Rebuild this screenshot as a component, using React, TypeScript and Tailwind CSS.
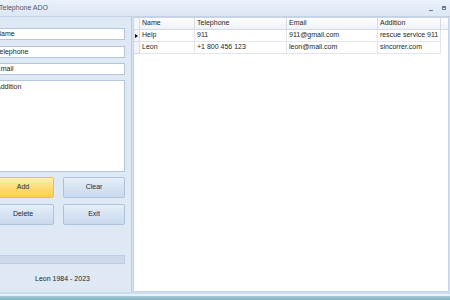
import React from 'react';

const rows = [
    { name: 'Help', tel: '911', email: '911@gmail.com', add: 'rescue service 911', current: true },
    { name: 'Leon', tel: '+1 800 456 123', email: 'leon@mail.com', add: 'sincorrer.com', current: false },
];

const cols = [
    { key: 'name', label: 'Name', w: 'w-[55px]' },
    { key: 'tel', label: 'Telephone', w: 'w-[92px]' },
    { key: 'email', label: 'Email', w: 'w-[91px]' },
    { key: 'add', label: 'Addition', w: 'w-[63px]' },
] as const;

function Field({ text, className = '' }: { text: string; className?: string }) {
    return (
        <div className={`bg-white border border-[#b4c6dc] px-[3px] text-[7px] leading-[10px] text-[#222] ${className}`}>
            {text}
        </div>
    );
}

function Btn({ label, yellow = false }: { label: string; yellow?: boolean }) {
    return (
        <div
            className={`w-[62px] h-[21px] flex items-center justify-center rounded-[2px] border text-[7px] text-[#1f2a38] ${
                yellow
                    ? 'bg-gradient-to-b from-[#fff0b8] via-[#fddc74] to-[#fcd04f] border-[#e2bd62]'
                    : 'bg-gradient-to-b from-[#e7eff9] via-[#d6e3f3] to-[#c9d9ee] border-[#adc2db]'
            }`}
        >
            {label}
        </div>
    );
}

export default function App() {
    return (
        <div
            className="w-[450px] h-[300px] overflow-hidden flex flex-col bg-[#d8e4f3]"
            style={{ fontFamily: '"Liberation Sans", Arial, sans-serif' }}
        >
            {/* Title bar */}
            <div className="h-[17px] shrink-0 flex items-center bg-gradient-to-b from-[#eaf1fa] to-[#dce7f5] border-b border-[#c3d3e7] relative">
                <span className="-ml-[1px] text-[7px] text-[#4a5a70]">Telephone ADO</span>
                <div className="ml-auto flex items-center gap-[9px] pr-[4px]">
                    <div className="w-[4px] h-[1px] bg-[#6b7c92] mt-[4px]" />
                    <div className="w-[4px] h-[4px] border border-[#6b7c92] border-t-2" />
                </div>
            </div>

            {/* Body */}
            <div className="flex flex-1 min-h-0">
                {/* Left panel */}
                <div className="w-[132px] shrink-0 bg-[#dfe9f6] border-r border-[#b9cbe0] pr-[6px] overflow-hidden">
                    <div className="-ml-[8px] w-[133px] flex flex-col pt-[11px]">
                        <Field text="Name" className="h-[12px]" />
                        <Field text="Telephone" className="h-[12px] mt-[6px]" />
                        <Field text="Email" className="h-[12px] mt-[5px]" />
                        <Field text="Addition" className="h-[92px] mt-[5px] pt-[1px]" />
                        <div className="flex justify-between mt-[5px]">
                            <Btn label="Add" yellow />
                            <Btn label="Clear" />
                        </div>
                        <div className="flex justify-between mt-[6px]">
                            <Btn label="Delete" />
                            <Btn label="Exit" />
                        </div>
                        <div className="h-[9px] mt-[30px] bg-[#ccdaec] border border-[#bccde2]" />
                        <div className="mt-[10px] pl-[8px] text-center text-[7px] text-[#222]">Leon 1984 - 2023</div>
                    </div>
                </div>

                {/* Grid */}
                <div className="flex-1 ml-[1px] mr-[1px] bg-white border border-[#c8d4e2]">
                    <div className="flex h-[12px] border-b border-[#d5dbe3] bg-gradient-to-b from-[#ffffff] to-[#eef2f7] text-[7px] text-[#1e1e1e]">
                        <div className="w-[6px] border-r border-[#d5dbe3] bg-[#f3f5f8]" />
                        {cols.map((c) => (
                            <div key={c.key} className={`${c.w} border-r border-[#d5dbe3] pl-[2px] flex items-center`}>
                                {c.label}
                            </div>
                        ))}
                    </div>
                    {rows.map((r, i) => (
                        <div key={i} className="flex h-[12px] text-[7px] text-[#1e1e1e]">
                            <div className="w-[6px] border-r border-b border-[#d5dbe3] bg-[#f1f3f6] flex items-center justify-center">
                                {r.current && (
                                    <div className="w-0 h-0 border-y-[2.5px] border-y-transparent border-l-[3px] border-l-black" />
                                )}
                            </div>
                            {cols.map((c) => (
                                <div key={c.key} className={`${c.w} border-r border-b border-[#e2e6ec] pl-[2px] flex items-center`}>
                                    {r[c.key]}
                                </div>
                            ))}
                        </div>
                    ))}
                </div>
            </div>

            {/* Bottom frame */}
            <div className="h-[8px] shrink-0 flex flex-col">
                <div className="h-[2px] bg-[#cddcee]" />
                <div className="h-[2px] bg-[#e9f0f8]" />
                <div className="flex-1 bg-gradient-to-b from-[#a8c9d8] to-[#7fb0c4]" />
            </div>
        </div>
    );
}
